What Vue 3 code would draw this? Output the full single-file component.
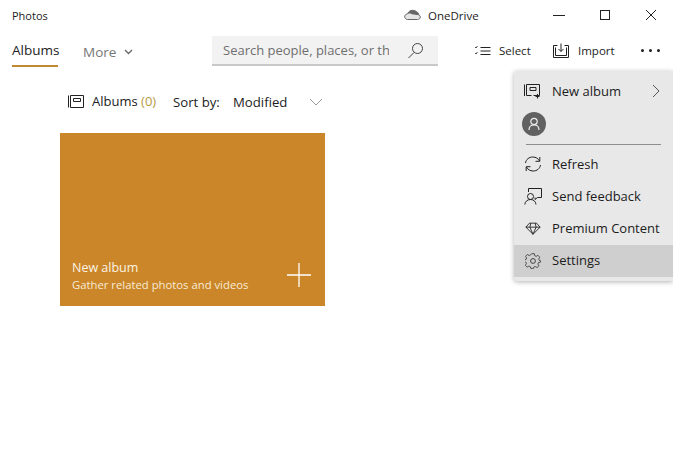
<script setup>
const menuItems = [
  { label: 'Refresh', icon: 'refresh' },
  { label: 'Send feedback', icon: 'feedback' },
  { label: 'Premium Content', icon: 'diamond' },
  { label: 'Settings', icon: 'gear', active: true }
]
</script>

<template>
  <div class="app">
    <header class="titlebar">
      <span class="app-name">Photos</span>
      <div class="onedrive">
        <svg width="17" height="12" viewBox="0 0 17 12"><path d="M3.5 10.5h10c1.600 0 2.800-1 2.800-2.400 0-1.400-1.100-2.400-2.500-2.400C13.300 3 11.200 1.300 8.600 1.300c-2.300 0-4.200 1.400-4.900 3.400C1.900 4.900.7 6.200.7 7.700c0 1.600 1.200 2.800 2.800 2.800z" fill="#e4e4e4" stroke="#666" /><path d="M1 7.500c1-3 4-3.500 6.500-2.500 2.500 1 4.500 1 8 .8-1-3-3.500-4.500-6.900-4.500-2.300 0-4.200 1.400-4.900 3.400C2.400 4.900 1.400 6 1 7.500z" fill="#666" /></svg>
        <span>OneDrive</span>
      </div>
      <div class="window-controls">
        <span class="win-btn"><svg width="12" height="12" viewBox="0 0 12 12"><path d="M0 6.500h12" stroke="#222" /></svg></span>
        <span class="win-btn"><svg width="12" height="12" viewBox="0 0 12 12"><rect x="1.500" y="1.500" width="9" height="9" fill="none" stroke="#222" /></svg></span>
        <span class="win-btn"><svg width="12" height="12" viewBox="0 0 12 12"><path d="M1 1l10 10M11 1L1 11" stroke="#222" /></svg></span>
      </div>
    </header>

    <nav class="navbar">
      <div class="tab active">Albums</div>
      <div class="more">
        <span>More</span>
        <svg width="9" height="6" viewBox="0 0 9 6"><path d="M1 1l3.500 3.500L8 1" fill="none" stroke="#666" stroke-width="1.300" /></svg>
      </div>
      <div class="search">
        <span class="search-text">Search people, places, or th</span>
        <svg width="17" height="17" viewBox="0 0 17 17"><circle cx="10.500" cy="6.500" r="5" fill="none" stroke="#444" /><path d="M7 10.500L1.500 16" stroke="#444" /></svg>
      </div>
      <div class="action select-action">
        <svg width="17" height="12" viewBox="0 0 17 12"><path d="M6.500 2.500h10M6.500 6h10M6.500 9.500h10" stroke="#222" /><path d="M1 2l1 1 1.500-2M1 8l1 1 1.500-2" fill="none" stroke="#333" stroke-width=".9" /></svg>
        <span>Select</span>
      </div>
      <div class="action import-action">
        <svg width="16" height="15" viewBox="0 0 16 15"><path d="M4.500 2.500H.5v12h15v-12h-4M2.500 4.500v8h11v-8" fill="none" stroke="#222" /><path d="M8 .5v8M5.500 6L8 8.500 10.500 6" fill="none" stroke="#222" /></svg>
        <span>Import</span>
      </div>
      <div class="dots"><i></i><i></i><i></i></div>
    </nav>

    <div class="subheader">
      <svg class="album-icon" width="16" height="13" viewBox="0 0 16 13"><path d="M.5.500v12M2.500.500h13v12h-13zM5.500 3.500h7v3h-7z" fill="none" stroke="#222" /></svg>
      <span class="albums-label">Albums <span class="count">(0)</span></span>
      <span class="sort-label">Sort by:</span>
      <span class="sort-value">Modified</span>
      <svg width="14" height="8" viewBox="0 0 14 8"><path d="M1 1l6 6 6-6" fill="none" stroke="#999" /></svg>
    </div>

    <main class="content">
      <section class="card">
        <div class="card-text">
          <div class="card-title">New album</div>
          <div class="card-sub">Gather related photos and videos</div>
        </div>
        <svg width="24" height="24" viewBox="0 0 24 24"><path d="M12 0v24M0 12h24" stroke="#fff" stroke-width="1.300" /></svg>
      </section>
    </main>

    <aside class="menu">
      <div class="menu-item first">
        <svg class="mi" width="18" height="16" viewBox="0 0 18 16"><path d="M.5 1.500v11.500M2.500 1.500h13v11h-6M2.500 1.500v11h5M6 4.500h6v3H6zM13.500 11v4.500M11.500 13.500h4" fill="none" stroke="#222" /></svg>
        <span class="grow">New album</span>
        <svg class="chev" width="8" height="14" viewBox="0 0 8 14"><path d="M1 1l6 6-6 6" fill="none" stroke="#555" /></svg>
      </div>
      <div class="avatar-row">
        <div class="avatar">
          <svg width="14" height="14" viewBox="0 0 14 14"><circle cx="7" cy="4.500" r="3.200" fill="none" stroke="#eee" stroke-width="1.200" /><path d="M2 13c0-3 2-5 5-5s5 2 5 5" fill="none" stroke="#eee" stroke-width="1.200" /></svg>
        </div>
      </div>
      <div class="divider"></div>
      <div v-for="item in menuItems" :key="item.label" class="menu-item" :class="{ active: item.active }">
        <svg v-if="item.icon === 'refresh'" class="mi" width="18" height="16" viewBox="0 0 18 16"><path d="M1.500 7C2 3.500 5 1 8.800 1c3 0 5.500 1.500 6.700 4M16.500 9c-.5 3.500-3.500 6-7.300 6-3 0-5.500-1.500-6.700-4M15.800 1v4.300h-4.300M2.200 15v-4.300h4.300" fill="none" stroke="#222" /></svg>
        <svg v-else-if="item.icon === 'feedback'" class="mi" width="18" height="17" viewBox="0 0 18 17"><circle cx="6.500" cy="8.500" r="3" fill="none" stroke="#222" /><path d="M.8 16.500c.3-3 2.500-5 5.700-5s5.200 2 5.500 5M4.500 4V.5h13v9h-4l-2.500 2v-2" fill="none" stroke="#222" /></svg>
        <svg v-else-if="item.icon === 'diamond'" class="mi small" width="16" height="13" viewBox="0 0 18 14"><path d="M5 1h8l4 4.500L9 13.500 1 5.500zM1 5.500h16M6.500 1L5.500 5.500 9 13.500l3.500-8L11.500 1" fill="none" stroke="#222" /></svg>
        <svg v-else class="mi small" width="16" height="16" viewBox="0 0 18 18"><circle cx="9" cy="9" r="2.700" fill="none" stroke="#333" /><path d="M7.500 1h3l.5 2.300 1.600.7 2-1.200 2 2.100-1.200 2 .6 1.600L17.500 9v1.500l-2.300.5-.7 1.600 1.200 2-2.100 2-2-1.200-1.600.6-.5 1.500h-3l-.5-1.900-1.600-.7-2 1.200-2-2 1.200-2-.7-1.600-2-.5V8l2.300-.5.6-1.600-1.200-2 2-2 2 1.200 1.600-.7z" transform="translate(0 -.2)" fill="none" stroke="#333" stroke-width=".9" /></svg>
        <span class="grow">{{ item.label }}</span>
      </div>
    </aside>
  </div>
</template>

<style>
html, body { margin: 0; background: #fff; }
</style>

<style scoped>
.app {
  position: relative;
  width: 673px;
  height: 472px;
  overflow: hidden;
  background: #fff;
  color: #1c1c1c;
  font-family: "Open Sans", "Noto Sans", sans-serif;
}
.titlebar {
  height: 32px;
  display: flex;
  align-items: center;
  padding-left: 12px;
}
.app-name { font-size: 11px; width: 392px; margin-top: -2px; }
.onedrive { display: flex; align-items: center; gap: 7px; font-size: 11.500px; width: 132px; margin-top: -2px; }
.window-controls { display: flex; gap: 34px; padding-left: 17px; margin-top: -2px; }
.win-btn { display: flex; width: 12px; height: 12px; }
.navbar {
  height: 38px;
  display: flex;
  align-items: center;
  padding-left: 12px;
}
.tab {
  width: 46px;
  font-size: 13.500px;
  height: 33px;
  line-height: 36px;
  border-bottom: 2px solid #c08a35;
  margin: -3px 25px 0 0;
  white-space: nowrap;
}
.more { display: flex; align-items: center; gap: 8px; width: 129px; color: #767676; font-size: 13.500px; padding-top: 1px; }
.search {
  width: 226px;
  height: 30px;
  box-sizing: border-box;
  background: #f2f2f2;
  border-bottom: 2px solid #c8c8c8;
  display: flex;
  align-items: center;
  padding: 0 14px 0 11px;
  justify-content: space-between;
}
.search-text { font-size: 13px; color: #6f6f6f; white-space: nowrap; width: 166px; overflow: hidden; }
.action { display: flex; align-items: center; gap: 8px; font-size: 11.500px; margin-top: -1px; }
.select-action { margin-left: 36px; width: 79px; }
.import-action { width: 88px; gap: 9px; }
.dots { display: flex; gap: 5px; margin-top: -1px; }
.dots i { width: 3px; height: 3px; background: #222; border-radius: 50%; }
.subheader {
  height: 63px;
  box-sizing: border-box;
  display: flex;
  align-items: center;
  padding: 0 0 0 68px;
  font-size: 13.200px;
}
.album-icon { margin-right: 8px; }
.albums-label { width: 81px; white-space: nowrap; margin-top: -2px; font-size: 13px; }
.count { color: #b9993f; }
.sort-label { width: 60px; }
.sort-value { width: 76px; }
.content { padding: 0 0 0 60px; }
.card {
  width: 265px;
  height: 173px;
  box-sizing: border-box;
  background: #ca8628;
  color: #fff;
  display: flex;
  align-items: flex-end;
  justify-content: space-between;
  padding: 0 14px 13px 12px;
}
.card svg { margin-bottom: 6px; }
.card-title { font-size: 12.500px; line-height: 16px; color: #fbf3e6; }
.card-sub { font-size: 11.300px; line-height: 17px; color: #f9ebd6; }
.menu {
  position: absolute;
  left: 514px;
  top: 71px;
  width: 159px;
  height: 210px;
  box-sizing: border-box;
  background: #e8e8e8;
  border-radius: 3px 0 0 3px;
  box-shadow: 0 1px 5px rgba(0, 0, 0, .3);
  font-size: 13px;
  padding-top: 4px;
}
.menu-item { height: 32px; display: flex; align-items: center; padding: 0 10px 0 10px; }
.menu-item.active { background: #cfcfcf; margin-top: 1px; }
.menu-item.active .grow { margin-top: -2px; }
.mi { margin-right: 10px; flex: none; }
.mi.small { margin: 0 11px 0 1px; }
.chev { margin-right: 3px; }
.grow { flex: 1; white-space: nowrap; }
.avatar-row { height: 34px; margin-bottom: 3px; display: flex; align-items: center; padding-left: 8px; }
.avatar { width: 24px; height: 24px; border-radius: 50%; background: #616161; display: flex; align-items: center; justify-content: center; }
.divider { height: 1px; background: #8e8e8e; margin: 0 12px 3px 12px; }
</style>
